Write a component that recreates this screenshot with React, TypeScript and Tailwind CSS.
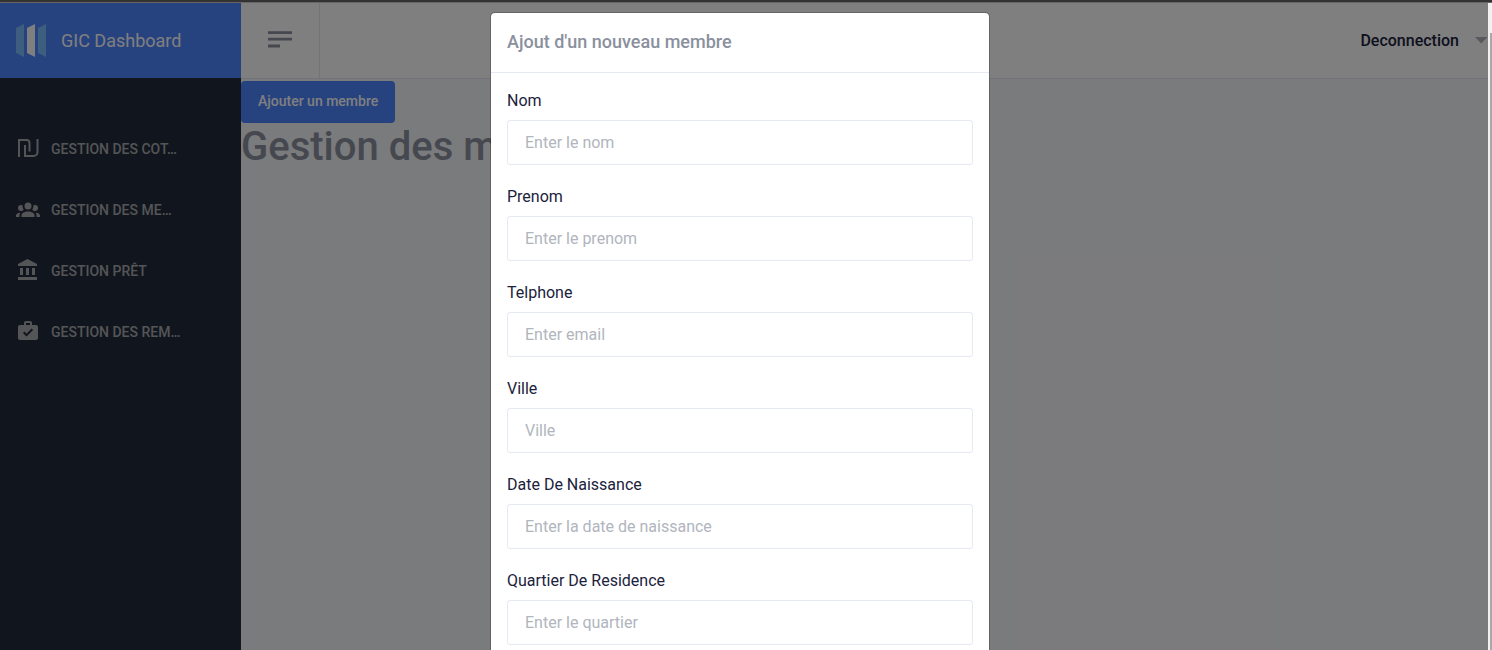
import React from "react";

const navItems = [
  {
    label: "GESTION DES COT…",
    icon: "M2 3H10.5A4 4 0 0 1 14.5 7V15.5H12.5V7A2 2 0 0 0 10.5 5H4V21H2ZM8 9H10V19H17.5A3 3 0 0 0 20.5 16V3H22.5V16A5 5 0 0 1 17.5 21H8Z",
  },
  {
    label: "GESTION DES ME…",
    icon: "M12,5.5A3.5,3.5 0 0,1 15.5,9A3.5,3.5 0 0,1 12,12.5A3.5,3.5 0 0,1 8.5,9A3.5,3.5 0 0,1 12,5.5M5,8C5.56,8 6.08,8.15 6.53,8.42C6.38,9.85 6.8,11.27 7.66,12.38C7.16,13.34 6.16,14 5,14A3,3 0 0,1 2,11A3,3 0 0,1 5,8M19,8A3,3 0 0,1 22,11A3,3 0 0,1 19,14C17.84,14 16.84,13.34 16.34,12.38C17.2,11.27 17.62,9.85 17.47,8.42C17.92,8.15 18.44,8 19,8M5.5,18.25C5.5,16.18 8.41,14.5 12,14.5C15.59,14.5 18.5,16.18 18.5,18.25V20H5.5V18.25M0,20V18.5C0,17.11 1.89,15.94 4.45,15.6C3.86,16.28 3.5,17.22 3.5,18.25V20H0M24,20H20.5V18.25C20.5,17.22 20.14,16.28 19.55,15.6C22.11,15.94 24,17.11 24,18.5V20Z",
  },
  {
    label: "GESTION PRÊT",
    icon: "M11.5,1L2,6V8H21V6M16,10V17H19V10M2,22H21V19H2M10,10V17H13V10M4,10V17H7V10H4Z",
  },
  {
    label: "GESTION DES REM…",
    icon: "M10,2H14A2,2 0 0,1 16,4V6H20A2,2 0 0,1 22,8V19A2,2 0 0,1 20,21H4C2.89,21 2,20.1 2,19V8C2,6.89 2.89,6 4,6H8V4C8,2.89 8.89,2 10,2M14,6V4H10V6H14M10.5,17.5L17.09,10.91L15.68,9.5L10.5,14.67L8.41,12.59L7,14L10.5,17.5Z",
  },
];

const fields = [
  { id: "nom", label: "Nom", placeholder: "Enter le nom" },
  { id: "prenom", label: "Prenom", placeholder: "Enter le prenom" },
  { id: "telephone", label: "Telphone", placeholder: "Enter email" },
  { id: "ville", label: "Ville", placeholder: "Ville" },
  { id: "naissance", label: "Date De Naissance", placeholder: "Enter la date de naissance" },
  { id: "quartier", label: "Quartier De Residence", placeholder: "Enter le quartier" },
];

function Sidebar() {
  return (
    <aside className="w-[241px] shrink-0 bg-[#222c3c]">
      <a href="#" className="flex h-[75px] items-center gap-[15px] bg-[#4c84ff] pl-4 text-lg text-white">
        <svg width="30" height="33" viewBox="0 0 30 33" aria-hidden="true">
          <path fill="#7dbcff" d="M0 4v25l8 4V0zM22 4v25l8 4V0z" />
          <path fill="#fff" d="M11 4v25l8 4V0z" />
        </svg>
        <span>GIC Dashboard</span>
      </a>
      <nav className="pt-10">
        <ul>
          {navItems.map((item) => (
            <li key={item.label}>
              <a href="#" className="flex h-[61px] items-center gap-[11px] pl-4 text-sm font-medium text-[#a9aaae]">
                <svg className="mb-0.5" width="24" height="24" viewBox="0 0 24 24" fill="currentColor" aria-hidden="true">
                  <path d={item.icon} />
                </svg>
                <span>{item.label}</span>
              </a>
            </li>
          ))}
        </ul>
      </nav>
    </aside>
  );
}

function Topbar() {
  return (
    <header className="flex h-[76px] items-stretch justify-between border-b border-[#e5e9f2] bg-white">
      <button type="button" aria-label="Menu" className="flex w-[79px] items-center justify-center border-r border-[#e5e9f2] pb-0.5">
        <svg width="24" height="17" viewBox="0 0 24 17" fill="#8a909d" aria-hidden="true">
          <path d="M0 .2h24V3H0zM0 6.8h24v2.8H0zM0 13.6h12v2.8H0z" />
        </svg>
      </button>
      <button type="button" className="flex items-center gap-4 text-base font-medium text-[#1b223c]">
        Deconnection
        <svg width="13" height="7" viewBox="0 0 13 7" fill="#b0b3b8" aria-hidden="true">
          <path d="M0 0h12.5L6.25 6.5z" />
        </svg>
      </button>
    </header>
  );
}

function MemberDialog() {
  return (
    <div
      role="dialog"
      aria-modal="true"
      aria-labelledby="dialog-title"
      className="w-full max-w-[500px] rounded-[5px] border border-black/20 bg-white bg-clip-padding"
    >
      <div className="border-b border-[#e5e9f2] px-4 pt-[15px] pb-[17px]">
        <h2 id="dialog-title" className="text-lg/[27px] font-medium text-[#8a909d]">
          Ajout d'un nouveau membre
        </h2>
      </div>
      <form className="flex flex-col gap-5 p-4">
        {fields.map((field) => (
          <div key={field.id} className="flex flex-col gap-[7px]">
            <label htmlFor={field.id} className="text-base/6 text-[#1b223c]">
              {field.label}
            </label>
            <input
              id={field.id}
              type="text"
              placeholder={field.placeholder}
              className="h-[45px] w-full rounded-[3px] border border-[#e5e9f2] bg-white px-[17px] text-base text-[#1b223c] placeholder:text-[#b1b5be]"
            />
          </div>
        ))}
      </form>
    </div>
  );
}

export default function App() {
  return (
    <div className="flex h-screen flex-col overflow-hidden font-['Roboto',sans-serif]">
      <div className="h-[3px] shrink-0 border-b border-[#666666] bg-[#333333]" />
      <div className="flex min-h-0 grow">
        <div className="relative flex min-w-0 grow overflow-hidden">
          <Sidebar />
          <div className="min-w-0 grow bg-[#f5f6fa]">
            <Topbar />
            <main className="flex flex-col items-start pt-0.5">
              <button type="button" className="h-[42px] rounded bg-[#4c84ff] px-[17px] pb-0.5 text-sm font-medium text-white">
                Ajouter un membre
              </button>
              <h1 className="text-[40px]/[48px] font-medium text-[#8a909d]">Gestion des membres</h1>
            </main>
          </div>
          <div className="absolute inset-0 flex items-start justify-center overflow-hidden bg-black/50 pt-[9px] pr-2">
            <MemberDialog />
          </div>
        </div>
        <div className="flex w-1 shrink-0 flex-col bg-[#f1f1f1] pt-[30px] pl-0.5" aria-hidden="true">
          <div className="grow bg-[#a8a8a8]" />
        </div>
      </div>
    </div>
  );
}
